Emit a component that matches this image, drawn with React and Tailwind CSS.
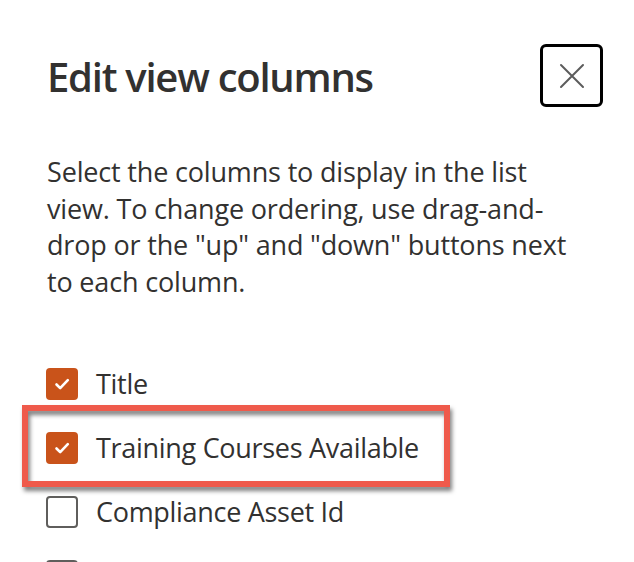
import React from "react";

function Check() {
  return (
    <svg width="32" height="32" viewBox="0 0 32 32" className="block">
      <path d="M10.5 16.5 L14.2 20.2 L21.8 12.2" fill="none" stroke="#ffffff" strokeWidth="2.6" strokeLinecap="round" strokeLinejoin="round" />
    </svg>
  );
}

function Row({ label, checked }) {
  return (
    <div className="flex h-[64px] shrink-0 items-center">
      {checked ? (
        <div className="h-[32px] w-[32px] shrink-0 rounded-[4px] bg-[#c9531a]">
          <Check />
        </div>
      ) : (
        <div className="h-[32px] w-[32px] shrink-0 rounded-[4px] border-2 border-[#5f5e5c] bg-white" />
      )}
      {label ? (
        <span className="ml-[18px] whitespace-nowrap text-[27px] leading-[36px] tracking-[-0.3px] text-[#323130]">{label}</span>
      ) : null}
    </div>
  );
}

export default function App() {
  return (
    <div
      className="relative h-[562px] w-[634px] overflow-hidden bg-white"
      style={{ fontFamily: '"Open Sans", "Noto Sans", sans-serif' }}
    >
      <div className="flex flex-col pl-[47px] pr-[31px] pt-[44px]">
        <div className="flex items-start justify-between">
          <h1 className="mt-[9px] text-[40px] font-semibold leading-[48px] tracking-[-1.25px] text-[#323130]">
            Edit view columns
          </h1>
          <button className="flex h-[63px] w-[63px] items-center justify-center rounded-[6px] border-[3px] border-black bg-white">
            <svg width="26" height="26" viewBox="0 0 26 26">
              <path d="M2 2 L24 24 M24 2 L2 24" stroke="#5c5c5c" strokeWidth="2" strokeLinecap="round" />
            </svg>
          </button>
        </div>
        <p className="mt-[47px] text-[27px] leading-[36.5px] tracking-[-0.17px] text-[#323130]">
          <span className="block whitespace-nowrap">Select the columns to display in the list</span>
          <span className="block whitespace-nowrap">view. To change ordering, use drag-and-</span>
          <span className="block whitespace-nowrap">drop or the "up" and "down" buttons next</span>
          <span className="block whitespace-nowrap">to each column.</span>
        </p>
        <div className="-ml-[1px] mt-[52px] flex flex-col">
          <Row label="Title" checked />
          <Row label="Training Courses Available" checked />
          <Row label="Compliance Asset Id" />
          <Row />
        </div>
      </div>
      <div className="pointer-events-none absolute left-[22px] top-[405px] h-[82px] w-[428px] border-[6px] border-[#ef5a4b] drop-shadow-[2px_4px_2px_rgba(0,0,0,0.5)]" />
    </div>
  );
}
